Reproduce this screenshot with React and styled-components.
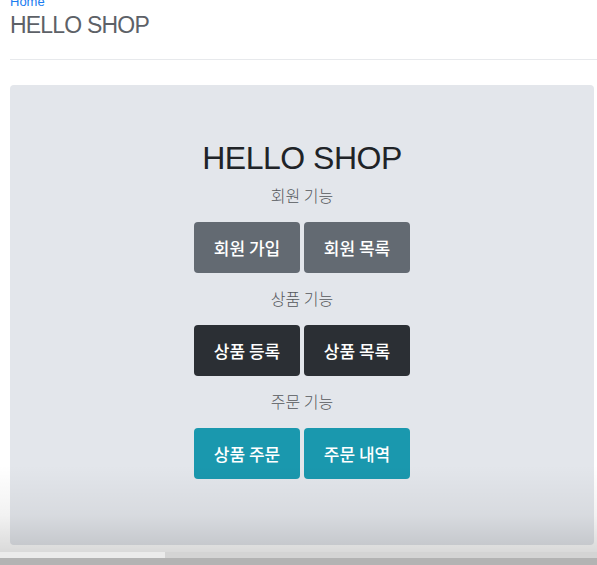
import React from "react";
import styled, { createGlobalStyle } from "styled-components";

const GlobalStyle = createGlobalStyle`
  html, body {
    margin: 0;
    padding: 0;
    background: #fff;
    overflow: hidden;
  }
  body {
    font-family: "Liberation Sans", "Noto Sans CJK KR", sans-serif;
  }
`;

const sections = [
  { title: "회원 기능", variant: "secondary", buttons: ["회원 가입", "회원 목록"] },
  { title: "상품 기능", variant: "dark", buttons: ["상품 등록", "상품 목록"] },
  { title: "주문 기능", variant: "info", buttons: ["상품 주문", "주문 내역"] },
];

const App = () => {
  return (
    <>
      <GlobalStyle />
      <Page>
        <Container>
          <HomeLink href="#">Home</HomeLink>
          <Header>
            <HeaderTitle>HELLO SHOP</HeaderTitle>
          </Header>
          <Jumbotron>
            <Title>HELLO SHOP</Title>
            {sections.map((s) => (
              <Section key={s.title}>
                <Lead>{s.title}</Lead>
                <ButtonRow>
                  {s.buttons.map((b) => (
                    <Button key={b} $variant={s.variant}>
                      {b}
                    </Button>
                  ))}
                </ButtonRow>
              </Section>
            ))}
          </Jumbotron>
        </Container>
        <PlayerShade>
          <Progress>
            <Played />
          </Progress>
          <ControlBar />
        </PlayerShade>
      </Page>
    </>
  );
};

const Page = styled.div`
  position: relative;
  width: 597px;
  height: 565px;
  overflow: hidden;
`;

const Container = styled.div`
  width: 584px;
  margin-left: 10px;
  display: flex;
  flex-direction: column;
`;

const HomeLink = styled.a`
  display: block;
  margin-top: -6px;
  font-size: 13px;
  line-height: 16px;
  color: #1a7cf0;
  text-decoration: none;
`;

const Header = styled.div`
  margin-top: 1px;
  border-bottom: 1px solid #e7e9ec;
  padding-bottom: 19px;
  margin-right: -4px;
`;

const HeaderTitle = styled.h3`
  margin: 0;
  font-size: 23px;
  line-height: 29px;
  font-weight: 400;
  color: #5d6167;
  letter-spacing: -0.8px;
`;

const Jumbotron = styled.div`
  margin-top: 25px;
  height: 460px;
  box-sizing: border-box;
  padding-top: 54px;
  background: #e3e6eb;
  border-radius: 4px;
  display: flex;
  flex-direction: column;
  align-items: center;
`;

const Title = styled.h1`
  margin: 0 0 6px;
  font-size: 32px;
  line-height: 38px;
  font-weight: 400;
  color: #202327;
  letter-spacing: -0.5px;
`;

const Section = styled.div`
  display: flex;
  flex-direction: column;
  align-items: center;
  margin-bottom: 13px;
`;

const Lead = styled.p`
  margin: 0 0 15px;
  font-family: "Noto Sans CJK KR", sans-serif;
  font-size: 16px;
  line-height: 24px;
  font-weight: 300;
  color: #55585c;
`;

const ButtonRow = styled.div`
  display: flex;
  gap: 4px;
`;

const colors = {
  secondary: "#636a72",
  dark: "#2b2f34",
  info: "#1a98ae",
};

const Button = styled.button`
  width: 106px;
  height: 51px;
  border: none;
  border-radius: 4px;
  background: ${(p) => colors[p.$variant]};
  color: #fff;
  font-family: "Noto Sans CJK KR", sans-serif;
  font-size: 17px;
  font-weight: 500;
  padding: 0;
  cursor: pointer;
`;

const PlayerShade = styled.div`
  position: absolute;
  left: 0;
  right: 0;
  bottom: 0;
  height: 100px;
  background: linear-gradient(
    to bottom,
    rgba(0, 0, 0, 0) 0%,
    rgba(0, 0, 0, 0.05) 50%,
    rgba(0, 0, 0, 0.18) 100%
  );
  display: flex;
  flex-direction: column;
  justify-content: flex-end;
`;

const Progress = styled.div`
  height: 6px;
  background: #d4d4d4;
`;

const Played = styled.div`
  width: 165px;
  height: 100%;
  background: #ebebeb;
`;

const ControlBar = styled.div`
  height: 7px;
  background: #b3b3b3;
`;

export default App;
